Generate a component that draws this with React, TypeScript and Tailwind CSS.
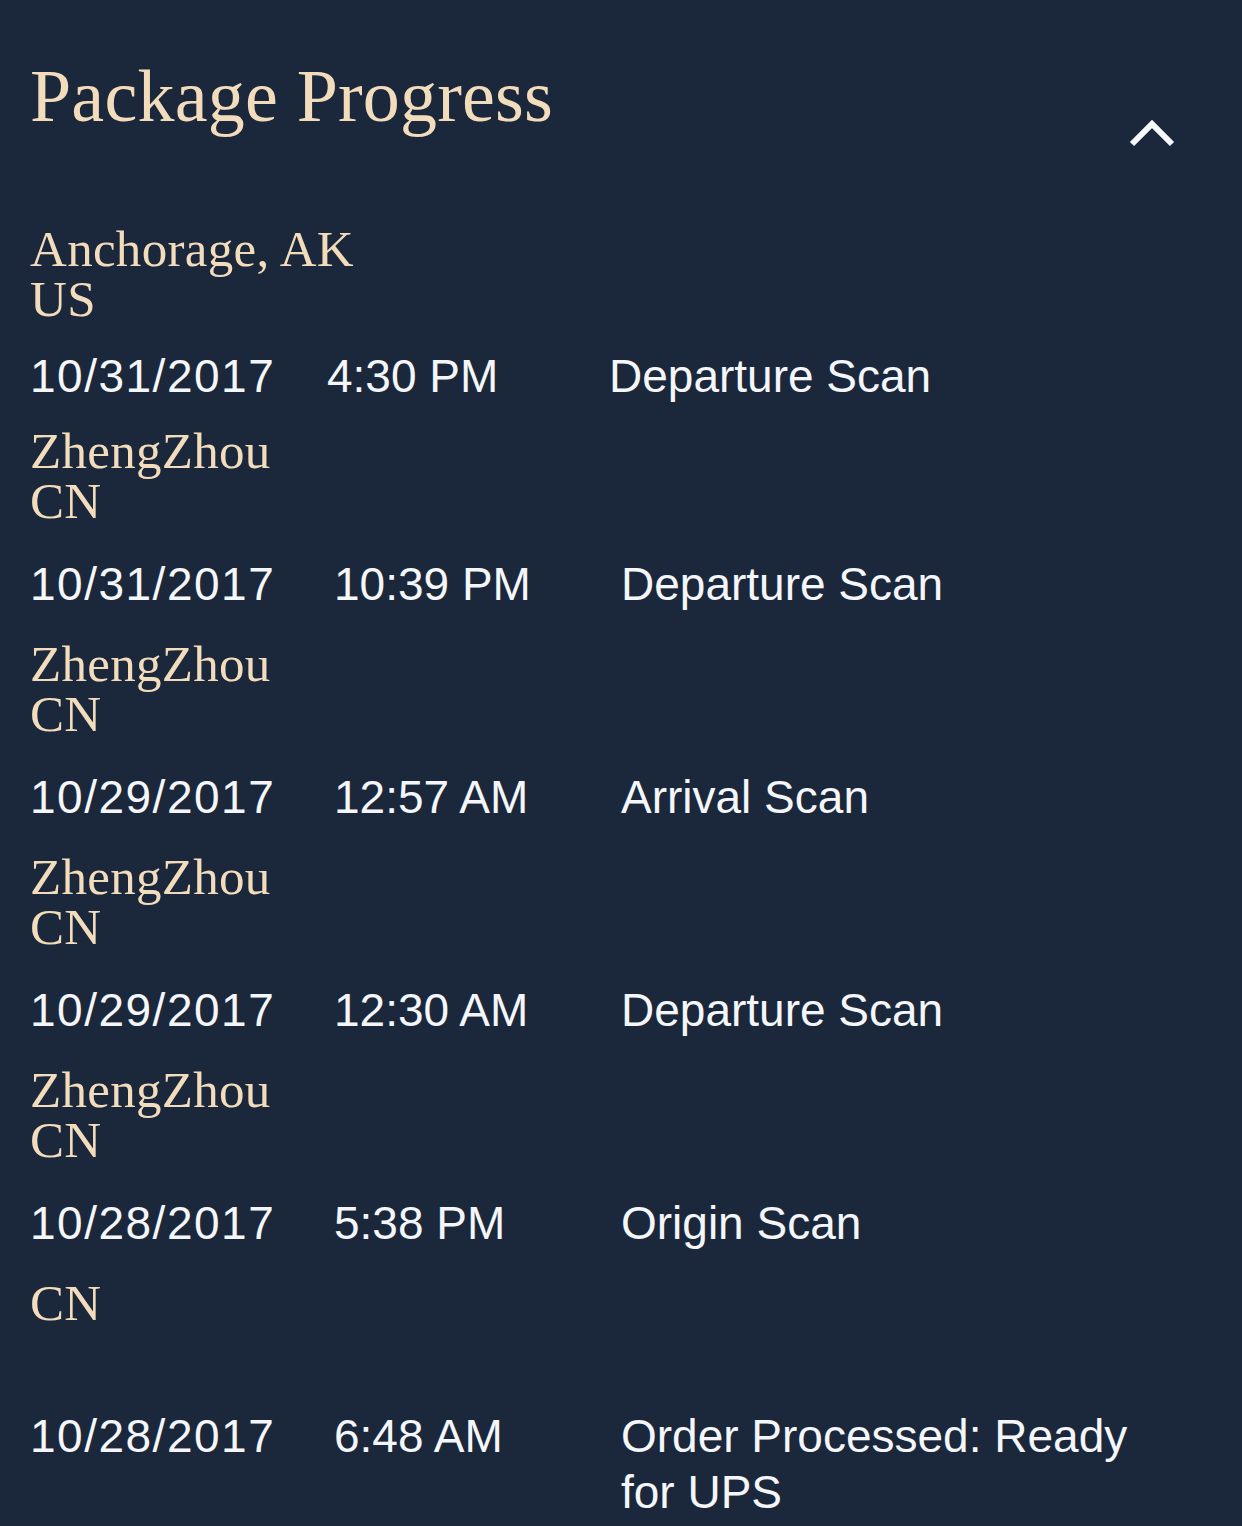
const EVENTS = [
  { lines: ["Anchorage, AK", "US"], date: "10/31/2017", time: "4:30 PM", desc: "Departure Scan", first: true },
  { lines: ["ZhengZhou", "CN"], date: "10/31/2017", time: "10:39 PM", desc: "Departure Scan" },
  { lines: ["ZhengZhou", "CN"], date: "10/29/2017", time: "12:57 AM", desc: "Arrival Scan" },
  { lines: ["ZhengZhou", "CN"], date: "10/29/2017", time: "12:30 AM", desc: "Departure Scan" },
  { lines: ["ZhengZhou", "CN"], date: "10/28/2017", time: "5:38 PM", desc: "Origin Scan" },
  { lines: ["CN", ""], date: "10/28/2017", time: "6:48 AM", desc: "Order Processed: Ready for UPS" },
];

const serif = "font-['Liberation_Serif',serif]";
const sans = "font-['Liberation_Sans',Arial,sans-serif]";

export default function App() {
  return (
    <div className="min-h-screen w-full bg-[#1b283b] px-[30px]">
      {/* header */}
      <div className="flex items-start justify-between pt-[59px] mb-[77px]">
        <h1 className={`${serif} text-[74px] leading-none text-[#f2dcbc] tracking-[0.2px]`}>
          Package Progress
        </h1>
        <button className="mt-[60px] mr-[37px]">
          <svg width="46" height="28" viewBox="0 0 46 28" fill="none">
            <polyline points="3,25 23,5 43,25" stroke="#f7f8fc" strokeWidth="6" strokeLinecap="butt" strokeLinejoin="miter" />
          </svg>
        </button>
      </div>

      {EVENTS.map((e, i) => (
        <div key={i}>
          {/* location */}
          <div className={`${serif} text-[51px] text-[#f2dcbc] tracking-[0.3px]`}>
            {e.lines.map((l, j) => (
              <div key={j} className="h-[50px] leading-[50px] whitespace-nowrap">
                {l}
              </div>
            ))}
          </div>

          {/* scan row */}
          <div
            className={
              e.first
                ? `${sans} grid grid-cols-[297px_282px_540px] pt-[24px] pb-[22px] text-[46px] leading-[56px] text-[#f4f6fa]`
                : `${sans} grid grid-cols-[304px_287px_540px] pt-[30px] pb-[27px] text-[46px] leading-[56px] text-[#f4f6fa]`
            }
          >
            <span className="tracking-[1.5px]">{e.date}</span>
            <span>{e.time}</span>
            <span>{e.desc}</span>
          </div>
        </div>
      ))}
    </div>
  );
}
